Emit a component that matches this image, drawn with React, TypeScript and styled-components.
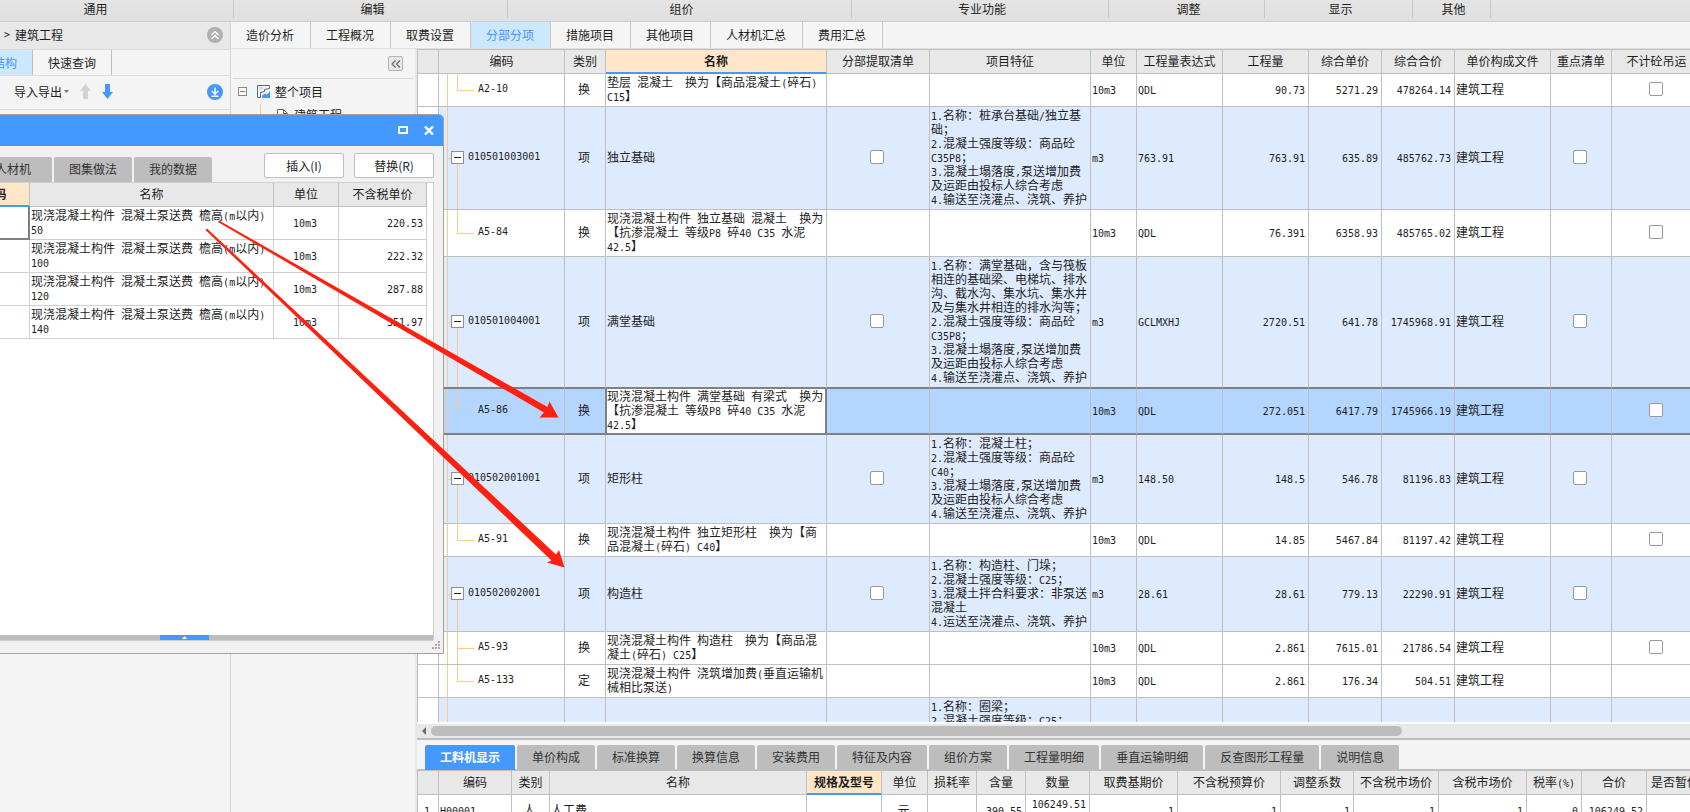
import React from "react";
import styled, { createGlobalStyle, css } from "styled-components";

const line = "#bfbfbf";
const blue = "#4499ff";
const branch = "#ffc988";

const GlobalStyle = createGlobalStyle`
  *, *::before, *::after { box-sizing: border-box; }
  body {
    margin: 0;
    background: #f4f4f4;
    color: #1e1e1e;
    font: 12px/14px "Noto Sans CJK SC", sans-serif;
    text-spacing-trim: space-all;
  }
  button { margin: 0; padding: 0; border: 0; background: none; color: inherit; font: inherit; white-space: nowrap; }
`;

/* ---------- page frame ---------- */

const Page = styled.div`
  position: relative;
  display: flex;
  flex-direction: column;
  height: 100vh;
  overflow: hidden;
`;

const Ribbon = styled.header`
  display: flex;
  flex: none;
  height: 22px;
  background: linear-gradient(#e4e4e4, #e0e0e0);
  border-bottom: 1px solid #cdcdcd;
`;

const RibbonGroup = styled.span<{ $w: number; $cut?: boolean }>`
  flex: none;
  width: ${(p) => p.$w}px;
  height: 18px;
  padding: 2px ${(p) => (p.$cut ? 42 : 0)}px 0 ${(p) => (p.$cut ? 0 : 4)}px;
  border-right: 1px solid #c8c8c8;
  text-align: center;
`;

const Body = styled.div`
  display: flex;
  flex: 1;
  min-height: 0;
`;

const SidePanel = styled.aside`
  flex: none;
  width: 231px;
  border-right: 1px solid #d4d4d4;
`;

const Crumb = styled.div`
  display: flex;
  align-items: center;
  gap: 5px;
  height: 28px;
  padding: 0 7px 2px 4px;
  background: #e8e8e8;
  border-bottom: 1px solid #dadada;
`;

const SideTabs = styled.div`
  display: flex;
  height: 26px;
  border-bottom: 1px solid #dcdcdc;
  overflow: hidden;
`;

const SideTab = styled.button<{ $w: number; $on?: boolean }>`
  display: flex;
  flex: none;
  align-items: center;
  justify-content: ${(p) => (p.$on ? "flex-end" : "center")};
  width: ${(p) => p.$w}px;
  padding-right: ${(p) => (p.$on ? 15 : 0)}px;
  overflow: hidden;
  border-right: 1px solid ${line};
  background: ${(p) => (p.$on ? "#cce8ff" : "#f5f5f5")};
  color: ${(p) => (p.$on ? blue : "inherit")};
`;

const SideTools = styled.div`
  display: flex;
  align-items: center;
  gap: 11px;
  height: 34px;
  padding: 0 7px 2px 14px;
  border-bottom: 1px solid #dcdcdc;
`;

const MenuButton = styled.button`
  display: flex;
  align-items: center;
  gap: 2px;
`;

const IconButton = styled.button<{ $end?: boolean }>`
  display: flex;
  margin-left: ${(p) => (p.$end ? "auto" : "0")};
`;

const Main = styled.main`
  display: flex;
  flex: 1;
  flex-direction: column;
  min-width: 0;
`;

const PageTabs = styled.nav`
  display: flex;
  flex: none;
  height: 27px;
  border-bottom: 1px solid #dedede;
`;

const PageTab = styled.button<{ $on?: boolean }>`
  height: 26px;
  padding: 0 16px 0 15px;
  border-right: 1px solid #c8c8c8;
  background: ${(p) => (p.$on ? "#cce8ff" : "#f5f5f5")};
  color: ${(p) => (p.$on ? blue : "inherit")};
`;

const Work = styled.div`
  display: flex;
  flex: 1;
  min-height: 0;
`;

const TreePanel = styled.div`
  flex: none;
  width: 186px;
  padding: 0 2px;
  border-right: 2px solid #e8e8e8;
`;

const TreeHead = styled.div`
  display: flex;
  justify-content: flex-end;
  height: 30px;
  padding: 7px 10px 0 0;
  border-bottom: 1px solid #d8d8d8;
`;

const Collapse = styled.button`
  display: flex;
  align-items: center;
  justify-content: center;
  width: 15px;
  height: 15px;
  border: 1px solid #b4b4b4;
  border-radius: 2px;
  background: #e9e9e9;
`;

const TreeRow = styled.div<{ $child?: boolean }>`
  display: flex;
  align-items: center;
  gap: ${(p) => (p.$child ? 6 : 10)}px;
  height: ${(p) => (p.$child ? 22 : 25)}px;
  padding-left: ${(p) => (p.$child ? 44 : 5)}px;
  ${(p) =>
    p.$child &&
    css`
      background: linear-gradient(${branch}, ${branch}) 27px 0 / 1px 100% no-repeat;
    `}
`;

const TreeLabel = styled.span`
  display: flex;
  align-items: center;
  gap: 5px;
`;

/* ---------- grids ---------- */

const GridArea = styled.div`
  display: flex;
  flex: 1;
  flex-direction: column;
  min-width: 0;
`;

const GridView = styled.div<{ $fill?: boolean }>`
  ${(p) => (p.$fill ? "flex: 1; min-height: 0;" : "flex: none; height: 41px;")}
  overflow: hidden;
  background: #fff;
`;

const Table = styled.table<{ $light?: boolean; $topLine?: boolean }>`
  table-layout: fixed;
  width: 1px;
  border-collapse: separate;
  border-spacing: 0;
  border-left: 1px solid ${line};
  border-top: ${(p) => (p.$topLine ? `1px solid ${line}` : "0")};
  --rule: ${(p) => (p.$light ? "#d0d0d0" : line)};
`;

const Th = styled.th<{ $hot?: boolean }>`
  height: 24px;
  padding: 0 0 ${(p) => (p.$hot ? 1 : 2)}px;
  overflow: hidden;
  border-right: 1px solid ${line};
  border-bottom: ${(p) => (p.$hot ? `2px solid ${blue}` : `1px solid ${line}`)};
  background: ${(p) => (p.$hot ? "#ffe6c8" : "#e8e8e8")};
  font-weight: ${(p) => (p.$hot ? 700 : 400)};
  white-space: nowrap;
`;

type Align = "left" | "center" | "right";

const Td = styled.td<{ $align?: Align; $top?: boolean }>`
  padding: 1px 3px 3px 1px;
  overflow: hidden;
  border-right: 1px solid var(--rule);
  border-bottom: 1px solid var(--rule);
  text-align: ${(p) => p.$align ?? "left"};
  vertical-align: ${(p) => (p.$top ? "top" : "middle")};
  white-space: pre;
`;

const FocusTd = styled(Td)`
  background: #fff;
  border-right: 2px solid #808080;
  border-bottom: 2px solid #808080;
`;

const Tr = styled.tr<{ $tone: "plain" | "group" | "selected"; $above?: boolean }>`
  & > td:not(:first-child) {
    background-color: ${(p) =>
      p.$tone === "group" ? "#deeafe" : p.$tone === "selected" ? "#b3d5ff" : "#fff"};
  }
  ${(p) =>
    (p.$above || p.$tone === "selected") &&
    css`
      & > td {
        border-bottom: 2px solid #808080;
      }
    `}
  ${(p) =>
    p.$tone === "selected" &&
    css`
      & > td {
        padding-top: 0;
        padding-bottom: 2px;
      }
      & > td:nth-child(4) {
        background-color: #fff;
        border-right: 2px solid #808080;
        box-shadow: -1px 0 0 #808080, inset 1px 0 0 #808080;
      }
    `}
`;

const CodeTd = styled(Td)<{ $parent?: boolean; $last?: boolean }>`
  padding-left: ${(p) => (p.$parent ? 12 : 39)}px;
  background-image: linear-gradient(${branch}, ${branch}), linear-gradient(${branch}, ${branch}),
    linear-gradient(${branch}, ${branch});
  background-repeat: no-repeat;
  background-position: 8px 0, 18px ${(p) => (p.$parent ? "100%" : "0")}, ${(p) => (p.$parent ? 8 : 18)}px 50%;
  background-size: 1px 100%, 1px ${(p) => (p.$parent || p.$last ? "50%" : "100%")},
    ${(p) => (p.$parent ? 4 : 17)}px 1px;
`;

const CodeLine = styled.div`
  display: flex;
  align-items: center;
  gap: 4px;
`;

const Toggle = styled.button`
  display: flex;
  align-items: center;
  justify-content: center;
  width: 13px;
  height: 13px;
  border: 1px solid #909090;
  background: #fff;
  &::before {
    content: "";
    width: 7px;
    height: 1px;
    background: #222;
  }
`;

const Check = styled.input`
  display: block;
  appearance: none;
  width: 14px;
  height: 14px;
  margin: 0 auto;
  border: 1px solid #999;
  border-radius: 2px;
  background: #fff;
`;

const Latin = styled.span`
  font: 10px/10px "DejaVu Sans Mono", monospace;
`;

/* Latin runs take half the width of a Chinese character. */
const Txt = ({ children }: { children: string }) => (
  <>
    {children
      .split(/([\x20-\x7e]+)/)
      .map((part, i) => (i % 2 ? <Latin key={i}>{part}</Latin> : part))}
  </>
);

const ScrollBar = styled.div`
  display: flex;
  flex: none;
  align-items: center;
  gap: 5px;
  height: 16px;
  padding-left: 5px;
  border-top: 2px solid #fff;
  background: #e8e8e8;
`;

const Thumb = styled.div`
  width: 76.6%;
  height: 10px;
  border-radius: 5px;
  background: #bdbdbd;
`;

const DetailTabs = styled.div`
  display: flex;
  flex: none;
  gap: 2px;
  height: 33px;
  padding: 5px 8px 0;
  border-top: 2px solid ${line};
  border-bottom: 2px solid ${line};
  background: #f4f4f4;
`;

const GrayTab = styled.button<{ $on?: boolean }>`
  min-width: 78px;
  height: 25px;
  padding: 0 15px 1px;
  border-radius: 2px 2px 0 0;
  background: ${(p) => (p.$on ? blue : "#bdbdbd")};
  color: ${(p) => (p.$on ? "#fff" : "#333")};
  font-weight: ${(p) => (p.$on ? 700 : 400)};
`;

/* ---------- floating window ---------- */

const Dialog = styled.section`
  position: absolute;
  top: 114px;
  left: -42px;
  width: 486px;
  display: flex;
  flex-direction: column;
  height: 540px;
  overflow: hidden;
  border: 1px solid #a0a0a0;
  border-radius: 0 5px 0 0;
  background: #f1f1f1;
`;

const TitleBar = styled.div`
  display: flex;
  flex: none;
  align-items: center;
  justify-content: flex-end;
  gap: 16px;
  height: 31px;
  padding: 0 9px 1px 0;
  background: ${blue};
`;

const DialogTools = styled.div`
  display: flex;
  flex: none;
  align-items: flex-end;
  gap: 2px;
  height: 36px;
  padding-left: 15px;
`;

const Actions = styled.div`
  display: flex;
  gap: 10px;
  margin: 0 9px 4px auto;
`;

const Action = styled.button`
  width: 80px;
  height: 25px;
  border: 1px solid ${line};
  border-radius: 2px;
  background: #fff;
`;

const DialogContent = styled.div`
  display: flex;
  flex: 1;
  flex-direction: column;
  margin-right: 9px;
  border: 1px solid #d0d0d0;
  border-left: 0;
  background: #fff;
`;

const Splitter = styled.div`
  height: 5px;
  margin-top: auto;
  padding-left: 201px;
  background: #bdbdbd;
`;

const SplitterGrip = styled.button`
  display: flex;
  align-items: center;
  justify-content: center;
  width: 49px;
  height: 5px;
  background: ${blue};
`;

const DialogFoot = styled.div`
  display: flex;
  flex: none;
  justify-content: flex-end;
  height: 12px;
  padding-right: 2px;
`;

const Arrows = styled.svg`
  position: absolute;
  top: 0;
  left: 0;
  pointer-events: none;
`;

/* ---------- data ---------- */

const ribbon: [string, number][] = [
  ["通用", 234], ["编辑", 274], ["组价", 344], ["专业功能", 257],
  ["调整", 156], ["显示", 148], ["其他", 78],
];

const pages = ["造价分析", "工程概况", "取费设置", "分部分项", "措施项目", "其他项目", "人材机汇总", "费用汇总"];

const mainCols: [string, number][] = [
  ["", 21], ["编码", 126], ["类别", 41], ["名称", 221], ["分部提取清单", 103],
  ["项目特征", 161], ["单位", 46], ["工程量表达式", 86], ["工程量", 86], ["综合单价", 73],
  ["综合合价", 73], ["单价构成文件", 96], ["重点清单", 61], ["不计砼吊运", 90],
];

type Item = {
  code: string; kind: string; name: string; feature?: string; unit?: string; expr?: string;
  qty?: string; price?: string; total?: string; parent?: boolean; last?: boolean;
  selected?: boolean; above?: boolean; crane?: boolean; blank?: boolean;
};

const items: Item[] = [
  { code: "A2-10", kind: "换", name: "垫层 混凝土  换为【商品混凝土(碎石)\nC15】", unit: "10m3", expr: "QDL", qty: "90.73", price: "5271.29", total: "478264.14", last: true, crane: true },
  { code: "010501003001", kind: "项", name: "独立基础", parent: true, feature: "1.名称：桩承台基础/独立基\n础；\n2.混凝土强度等级：商品砼\nC35P8；\n3.混凝土塌落度,泵送增加费\n及运距由投标人综合考虑\n4.输送至浇灌点、浇筑、养护", unit: "m3", expr: "763.91", qty: "763.91", price: "635.89", total: "485762.73" },
  { code: "A5-84", kind: "换", name: "现浇混凝土构件 独立基础 混凝土  换为\n【抗渗混凝土 等级P8 碎40 C35 水泥\n42.5】", unit: "10m3", expr: "QDL", qty: "76.391", price: "6358.93", total: "485765.02", last: true, crane: true },
  { code: "010501004001", kind: "项", name: "满堂基础", parent: true, above: true, feature: "1.名称：满堂基础，含与筏板\n相连的基础梁、电梯坑、排水\n沟、截水沟、集水坑、集水井\n及与集水井相连的排水沟等；\n2.混凝土强度等级：商品砼\nC35P8；\n3.混凝土塌落度,泵送增加费\n及运距由投标人综合考虑\n4.输送至浇灌点、浇筑、养护", unit: "m3", expr: "GCLMXHJ", qty: "2720.51", price: "641.78", total: "1745968.91" },
  { code: "A5-86", kind: "换", name: "现浇混凝土构件 满堂基础 有梁式  换为\n【抗渗混凝土 等级P8 碎40 C35 水泥\n42.5】", unit: "10m3", expr: "QDL", qty: "272.051", price: "6417.79", total: "1745966.19", last: true, selected: true, crane: true },
  { code: "010502001001", kind: "项", name: "矩形柱", parent: true, feature: "1.名称：混凝土柱；\n2.混凝土强度等级：商品砼\nC40；\n3.混凝土塌落度,泵送增加费\n及运距由投标人综合考虑\n4.输送至浇灌点、浇筑、养护", unit: "m3", expr: "148.50", qty: "148.5", price: "546.78", total: "81196.83" },
  { code: "A5-91", kind: "换", name: "现浇混凝土构件 独立矩形柱  换为【商\n品混凝土(碎石) C40】", unit: "10m3", expr: "QDL", qty: "14.85", price: "5467.84", total: "81197.42", last: true, crane: true },
  { code: "010502002001", kind: "项", name: "构造柱", parent: true, feature: "1.名称：构造柱、门垛；\n2.混凝土强度等级：C25；\n3.混凝土拌合料要求：非泵送\n混凝土\n4.运送至浇灌点、浇筑、养护", unit: "m3", expr: "28.61", qty: "28.61", price: "779.13", total: "22290.91" },
  { code: "A5-93", kind: "换", name: "现浇混凝土构件 构造柱  换为【商品混\n凝土(碎石) C25】", unit: "10m3", expr: "QDL", qty: "2.861", price: "7615.01", total: "21786.54", crane: true },
  { code: "A5-133", kind: "定", name: "现浇混凝土构件 浇筑增加费(垂直运输机\n械相比泵送)", unit: "10m3", expr: "QDL", qty: "2.861", price: "176.34", total: "504.51", last: true },
  { code: "", kind: "", name: "", parent: true, blank: true, feature: "1.名称：圈梁；\n2.混凝土强度等级：C25；\n\n\n" },
];

const detailTabs = ["工料机显示", "单价构成", "标准换算", "换算信息", "安装费用", "特征及内容", "组价方案", "工程量明细", "垂直运输明细", "反查图形工程量", "说明信息"];

const detailCols: [string, number, string, Align][] = [
  ["", 21, "1", "center"], ["编码", 73, "H00001", "left"], ["类别", 38, "人", "center"],
  ["名称", 257, "人工费", "left"], ["规格及型号", 75, "", "left"], ["单位", 46, "元", "center"],
  ["损耗率", 49, "", "right"], ["含量", 49, "390.55", "right"], ["数量", 64, "106249.51", "right"],
  ["取费基期价", 88, "1", "right"], ["不含税预算价", 103, "1", "right"], ["调整系数", 73, "1", "right"],
  ["不含税市场价", 85, "1", "right"], ["含税市场价", 88, "1", "right"], ["税率(%)", 55, "0", "right"],
  ["合价", 65, "106249.52", "right"], ["是否暂估", 57, "", "left"],
];

const dialogCols: [string, number][] = [["编码", 70], ["名称", 244], ["单位", 65], ["不含税单价", 88]];
const pumpFees = [["50", "220.53"], ["100", "222.32"], ["120", "287.88"], ["140", "351.97"]];

/* ---------- pieces ---------- */

const Cols = ({ widths }: { widths: number[] }) => (
  <colgroup>
    {widths.map((w, i) => (
      <col key={i} width={w} />
    ))}
  </colgroup>
);

const MainGrid = () => (
  <Table $topLine>
    <Cols widths={mainCols.map((c) => c[1])} />
    <thead>
      <tr>
        {mainCols.map(([t]) => (
          <Th key={t} $hot={t === "名称"}>{t}</Th>
        ))}
      </tr>
    </thead>
    <tbody>
      {items.map((r, i) => (
        <Tr key={i} $tone={r.selected ? "selected" : r.parent ? "group" : "plain"} $above={r.above}>
          <Td />
          <CodeTd $parent={r.parent} $last={r.last}>
            <CodeLine>
              {r.parent && !r.blank && <Toggle type="button" aria-label={`折叠 ${r.code}`} />}
              <Latin>{r.code}</Latin>
            </CodeLine>
          </CodeTd>
          <Td $align="center">{r.kind}</Td>
          <Td><Txt>{r.name}</Txt></Td>
          <Td>{r.parent && !r.blank && <Check type="checkbox" aria-label={`分部提取清单 ${r.code}`} />}</Td>
          <Td><Txt>{r.feature ?? ""}</Txt></Td>
          <Td><Latin>{r.unit}</Latin></Td>
          <Td><Latin>{r.expr}</Latin></Td>
          <Td $align="right"><Latin>{r.qty}</Latin></Td>
          <Td $align="right"><Latin>{r.price}</Latin></Td>
          <Td $align="right"><Latin>{r.total}</Latin></Td>
          <Td>{r.blank ? "" : "建筑工程"}</Td>
          <Td>{r.parent && !r.blank && <Check type="checkbox" aria-label={`重点清单 ${r.code}`} />}</Td>
          <Td>{r.crane && <Check type="checkbox" aria-label={`不计砼吊运 ${r.code}`} />}</Td>
        </Tr>
      ))}
    </tbody>
  </Table>
);

const DetailGrid = () => (
  <Table>
    <Cols widths={detailCols.map((c) => c[1])} />
    <thead>
      <tr>
        {detailCols.map(([t]) => (
          <Th key={t} $hot={t === "规格及型号"}><Txt>{t}</Txt></Th>
        ))}
      </tr>
    </thead>
    <tbody>
      <tr>
        {detailCols.map(([t, , value, align]) => (
          <Td key={t} $align={align} $top={t === "数量"}>
            <Txt>{t === "数量" ? value + "\n " : value}</Txt>
          </Td>
        ))}
      </tr>
    </tbody>
  </Table>
);

const FeeDialog = () => (
  <Dialog aria-label="查询">
    <TitleBar>
      <IconButton type="button" aria-label="最大化">
        <svg width="10" height="8" viewBox="0 0 10 8"><rect x="1" y="1" width="8" height="6" fill="none" stroke="#fff" strokeWidth="2" /></svg>
      </IconButton>
      <IconButton type="button" aria-label="关闭">
        <svg width="10" height="9" viewBox="0 0 10 9"><path d="M1 .5l8 8M9 .5l-8 8" stroke="#fff" strokeWidth="2.400" /></svg>
      </IconButton>
    </TitleBar>
    <DialogTools>
      <GrayTab type="button">人材机</GrayTab>
      <GrayTab type="button">图集做法</GrayTab>
      <GrayTab type="button">我的数据</GrayTab>
      <Actions>
        <Action type="button">插入(I)</Action>
        <Action type="button">替换(R)</Action>
      </Actions>
    </DialogTools>
    <DialogContent>
      <Table $light>
        <Cols widths={dialogCols.map((c) => c[1])} />
        <thead>
          <tr>
            {dialogCols.map(([t]) => (
              <Th key={t} $hot={t === "编码"}>{t}</Th>
            ))}
          </tr>
        </thead>
        <tbody>
          {pumpFees.map(([height, price], i) => (
            <tr key={height}>
              {i === 0 ? <FocusTd /> : <Td />}
              <Td><Txt>{`现浇混凝土构件 混凝土泵送费 檐高(m以内)\n${height}`}</Txt></Td>
              <Td $align="center"><Latin>10m3</Latin></Td>
              <Td $align="right"><Latin>{price}</Latin></Td>
            </tr>
          ))}
        </tbody>
      </Table>
      <Splitter>
        <SplitterGrip type="button" aria-label="展开">
          <svg width="5" height="3" viewBox="0 0 5 3"><path d="M0 3L2.500 0L5 3z" fill="#fff" /></svg>
        </SplitterGrip>
      </Splitter>
    </DialogContent>
    <DialogFoot>
      <svg width="9" height="9" viewBox="0 0 9 9" fill="#aaa">
        <path d="M6 0h2v2h-2zM3 3h2v2h-2zM6 3h2v2h-2zM0 6h2v2h-2zM3 6h2v2h-2zM6 6h2v2h-2z" />
      </svg>
    </DialogFoot>
  </Dialog>
);

export default function App() {
  return (
    <Page>
      <GlobalStyle />
      <Ribbon>
        {ribbon.map(([t, w], i) => (
          <RibbonGroup key={t} $w={w} $cut={i === 0}>{t}</RibbonGroup>
        ))}
      </Ribbon>
      <Body>
        <SidePanel>
          <Crumb>
            <Latin>&gt;</Latin>
            <span>建筑工程</span>
            <IconButton type="button" aria-label="收起" $end>
              <svg width="16" height="16" viewBox="0 0 16 16" fill="none" stroke="#fff" strokeWidth="1.500">
                <circle cx="8" cy="8" r="8" fill="#b0b0b0" stroke="none" />
                <path d="M4.500 8L8 4.500L11.500 8M4.500 12L8 8.500L11.500 12" />
              </svg>
            </IconButton>
          </Crumb>
          <SideTabs>
            <SideTab type="button" $w={33} $on>结构</SideTab>
            <SideTab type="button" $w={79}>快速查询</SideTab>
          </SideTabs>
          <SideTools>
            <MenuButton type="button">
              导入导出
              <svg width="5" height="3" viewBox="0 0 5 3"><path d="M0 0h5L2.500 3z" fill="#777" /></svg>
            </MenuButton>
            <IconButton type="button" aria-label="上移">
              <svg width="11" height="15" viewBox="0 0 11 15"><path d="M5.500 0L11 7H8V15H3V7H0z" fill="#d2d2d2" /></svg>
            </IconButton>
            <IconButton type="button" aria-label="下移">
              <svg width="11" height="15" viewBox="0 0 11 15"><path d="M5.500 15L11 8H8V0H3V8H0z" fill={blue} /></svg>
            </IconButton>
            <IconButton type="button" aria-label="下载" $end>
              <svg width="16" height="16" viewBox="0 0 16 16" fill="none" stroke="#fff" strokeWidth="1.500">
                <circle cx="8" cy="8" r="8" fill={blue} stroke="none" />
                <path d="M8 3.500V10M4.800 7L8 10.200L11.200 7M4.500 12.200H11.500" />
              </svg>
            </IconButton>
          </SideTools>
        </SidePanel>
        <Main>
          <PageTabs>
            {pages.map((t) => (
              <PageTab key={t} type="button" $on={t === "分部分项"}>{t}</PageTab>
            ))}
          </PageTabs>
          <Work>
            <TreePanel>
              <TreeHead>
                <Collapse type="button" aria-label="收起导航">
                  <svg width="10" height="8" viewBox="0 0 10 8" fill="none" stroke="#666" strokeWidth="1.200"><path d="M4.500 .5L1 4L4.500 7.500M9 .5L5.500 4L9 7.500" /></svg>
                </Collapse>
              </TreeHead>
              <TreeRow>
                <IconButton type="button" aria-label="折叠 整个项目">
                  <svg width="9" height="9" viewBox="0 0 9 9"><rect x=".5" y=".5" width="8" height="8" fill="#fff" stroke="#888" /><path d="M2 4.500h5" stroke="#3399dd" /></svg>
                </IconButton>
                <TreeLabel>
                  <svg width="13" height="13" viewBox="0 0 13 13">
                    <path d="M3.500 12.500H.5V.5H12.500" fill="none" stroke="#666" />
                    <path d="M2.500 2h3.500v2.500h-3.500z" fill="#b9dcf7" />
                    <path d="M3.500 12.500V7.500L7.500 6.500V4.500L12.500 3.500V.5" fill="none" stroke="#666" />
                    <path d="M5 13V10.500L8 8.500L10 9.500L13 6V13z" fill={blue} />
                  </svg>
                  整个项目
                </TreeLabel>
              </TreeRow>
              <TreeRow $child>
                <svg width="11" height="13" viewBox="0 0 11 13" fill="#fff" stroke="#666"><path d="M.5 12.500V.5H6.500L10.500 4.500V12.500zM6.500 .5V4.500H10.500" /></svg>
                建筑工程
              </TreeRow>
            </TreePanel>
            <GridArea>
              <GridView $fill><MainGrid /></GridView>
              <ScrollBar>
                <svg width="4" height="8" viewBox="0 0 4 8"><path d="M4 0V8L0 4z" fill="#666b75" /></svg>
                <Thumb />
              </ScrollBar>
              <DetailTabs>
                {detailTabs.map((t, i) => (
                  <GrayTab key={t} type="button" $on={i === 0}>{t}</GrayTab>
                ))}
              </DetailTabs>
              <GridView><DetailGrid /></GridView>
            </GridArea>
          </Work>
        </Main>
      </Body>
      <FeeDialog />
      <Arrows width="600" height="600" viewBox="0 0 600 600" fill="#ff2010">
        <path d="M219 220.500L547.500 407L549.500 401.500L558.500 417.500L539.500 417.500L544 412.500L218 222z" />
        <path d="M207 228.500L556 554.500L559 550L564.500 567.500L547 562.500L551.500 560.500L205.500 230z" />
      </Arrows>
    </Page>
  );
}
